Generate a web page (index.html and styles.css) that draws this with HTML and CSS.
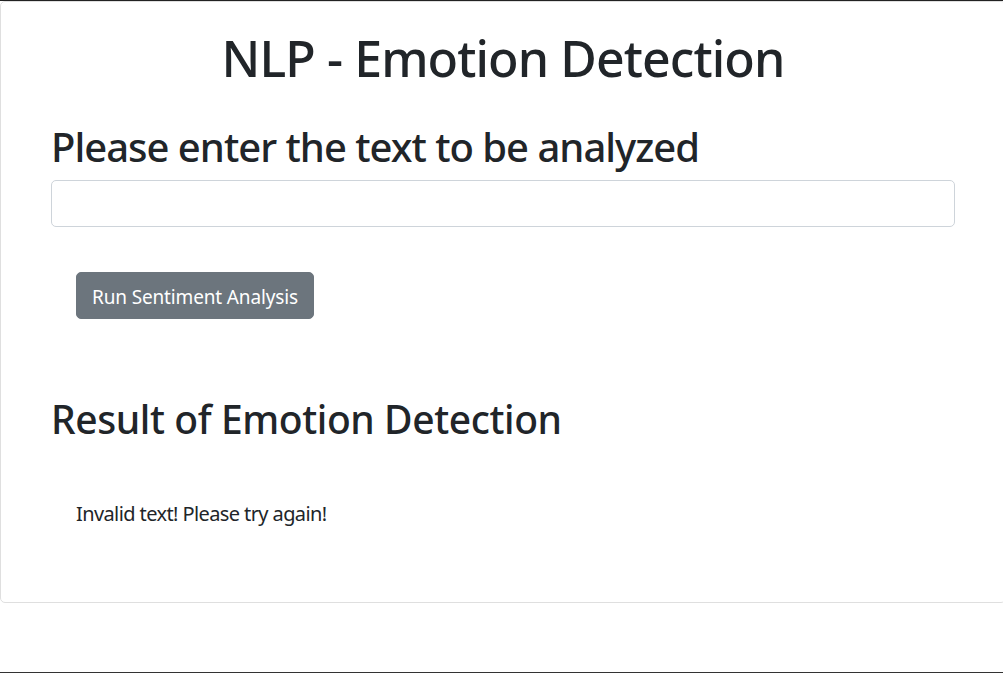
FILE: index.html
```html
<!DOCTYPE html>
<html lang="en">
<head>
<meta charset="utf-8">
<title>NLP - Emotion Detection</title>
<link rel="stylesheet" href="styles.css">
</head>
<body>
<div class="frame">
  <div class="card">
    <h1 class="title">NLP - Emotion Detection</h1>
    <h2 class="prompt">Please enter the text to be analyzed</h2>
    <input class="text-input" type="text" aria-label="Text to analyze">
    <div class="actions">
      <button class="btn" type="button">Run Sentiment Analysis</button>
    </div>
    <h2 class="result-title">Result of Emotion Detection</h2>
    <p class="result">Invalid text! Please try again!</p>
  </div>
</div>
</body>
</html>
```

FILE: styles.css
```css
* { box-sizing: border-box; }
html, body { margin: 0; padding: 0; background: #fff; }
body {
  font-family: "Noto Sans", "Open Sans", sans-serif;
  color: #212529;
}
.frame {
  height: 673px;
  border-top: 1px solid #222;
  border-bottom: 1px solid #333;
  overflow: hidden;
}
.card {
  width: 1006px;
  height: 602px;
  border: 1px solid #dfdfdf;
  border-radius: 5px;
  padding: 25px 50px 0 50px;
}
.title {
  margin: 0;
  font-size: 50px;
  line-height: 62px;
  font-weight: 500;
  letter-spacing: -0.9px;
  text-align: center;
}
.prompt {
  margin: 33px 0 0;
  font-size: 40px;
  line-height: 50px;
  font-weight: 500;
  letter-spacing: -1px;
}
.text-input {
  display: block;
  width: 100%;
  height: 47px;
  margin-top: 8px;
  border: 1px solid #ced4da;
  border-radius: 5px;
  font: inherit;
  font-size: 20px;
  padding: 0 16px;
}
.actions {
  margin-top: 45px;
  padding-left: 25px;
}
.btn {
  height: 47px;
  padding: 3px 15px 0;
  border: 1px solid #6c757d;
  border-radius: 5px;
  background: #6c757d;
  color: #fff;
  font-family: inherit;
  font-size: 19px;
  line-height: 1.5;
  letter-spacing: -0.15px;
}
.result-title {
  margin: 75px 0 0;
  font-size: 39px;
  line-height: 49px;
  font-weight: 500;
  letter-spacing: -0.4px;
}
.result {
  margin: 55px 0 0;
  padding-left: 25px;
  font-size: 20px;
  line-height: 32px;
  letter-spacing: -0.6px;
}
```
